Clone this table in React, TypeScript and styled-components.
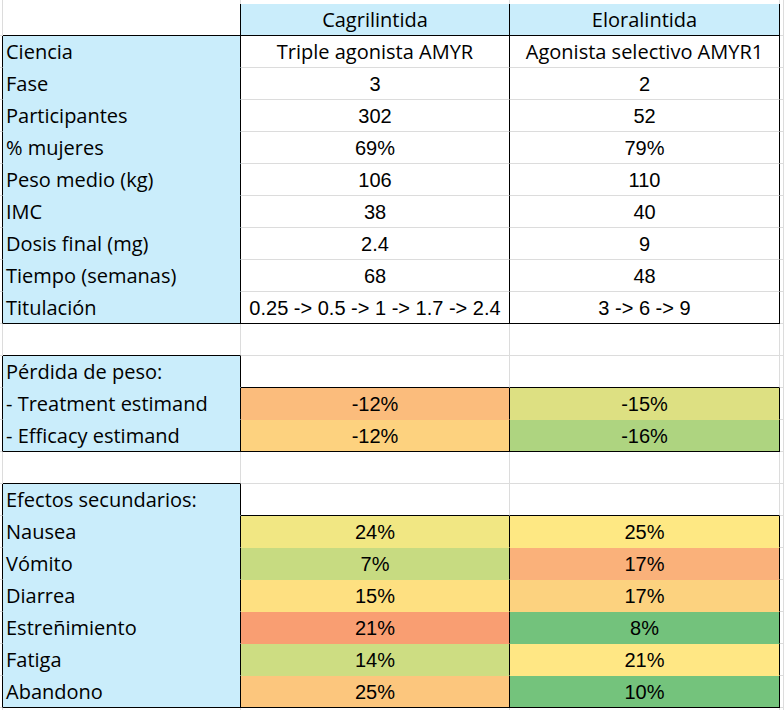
import React from "react";
import styled, { createGlobalStyle } from "styled-components";

const GRID = "#dcdcdc";
const BLACK = "#000000";
const BLUE = "#caedfb";
const WHITE = "#ffffff";

const GlobalStyle = createGlobalStyle`
  html, body { margin: 0; padding: 0; background: #ffffff; }
  body { width: 784px; height: 710px; overflow: hidden; }
`;

const Sheet = styled.div`
  display: grid;
  grid-template-columns: 3px 238px 269px 270px 4px;
  grid-template-rows: 4px repeat(22, 32px) 2px;
  width: 784px;
  height: 710px;
  background: #ffffff;
`;

type Kind = "label" | "text" | "num" | "none";

const Cell = styled.div<{
  $bg: string;
  $r: string;
  $b: string;
  $kind: Kind;
}>`
  box-sizing: border-box;
  min-width: 0;
  background: ${(p) => p.$bg};
  border-right: 1px solid ${(p) => p.$r};
  border-bottom: 1px solid ${(p) => p.$b};
  display: flex;
  align-items: flex-end;
  justify-content: ${(p) => (p.$kind === "label" ? "flex-start" : "center")};
  padding: 0 0 5px ${(p) => (p.$kind === "label" ? "3px" : "0")};
  font-family: ${(p) =>
    p.$kind === "num"
      ? '"Liberation Sans", Arial, sans-serif'
      : '"Open Sans", "Noto Sans", sans-serif'};
  font-size: 20px;
  line-height: 1;
  color: #000000;
  white-space: nowrap;
  overflow: hidden;
`;

type Content = { text: string; kind: Kind; bg?: string };

// sheet rows 1..22, columns 1..3 (A, B, C)
const content: Record<string, Content> = {};
const put = (r: number, c: number, text: string, kind: Kind, bg?: string) => {
  content[`${r}-${c}`] = { text, kind, bg };
};

put(1, 2, "Cagrilintida", "text", BLUE);
put(1, 3, "Eloralintida", "text", BLUE);

const mainRows: [string, string, string, Kind][] = [
  ["Ciencia", "Triple agonista AMYR", "Agonista selectivo AMYR1", "text"],
  ["Fase", "3", "2", "num"],
  ["Participantes", "302", "52", "num"],
  ["% mujeres", "69%", "79%", "num"],
  ["Peso medio (kg)", "106", "110", "num"],
  ["IMC", "38", "40", "num"],
  ["Dosis final (mg)", "2.4", "9", "num"],
  ["Tiempo (semanas)", "68", "48", "num"],
  ["Titulación", "0.25 -> 0.5 -> 1 -> 1.7 -> 2.4", "3 -> 6 -> 9", "num"],
];
mainRows.forEach(([l, b, c, k], i) => {
  const r = 2 + i;
  put(r, 1, l, "label", BLUE);
  put(r, 2, b, k, WHITE);
  put(r, 3, c, k, WHITE);
});

put(12, 1, "Pérdida de peso:", "label", BLUE);
const lossRows: [string, string, string, string, string][] = [
  ["- Treatment estimand", "-12%", "#fbbc7c", "-15%", "#dde082"],
  ["- Efficacy estimand", "-12%", "#fdd27f", "-16%", "#aed480"],
];
lossRows.forEach(([l, b, bb, c, cb], i) => {
  const r = 13 + i;
  put(r, 1, l, "label", BLUE);
  put(r, 2, b, "num", bb);
  put(r, 3, c, "num", cb);
});

put(16, 1, "Efectos secundarios:", "label", BLUE);
const sideRows: [string, string, string, string, string][] = [
  ["Nausea", "24%", "#f1e783", "25%", "#fee883"],
  ["Vómito", "7%", "#c7db81", "17%", "#fab17a"],
  ["Diarrea", "15%", "#fee081", "17%", "#fcd27f"],
  ["Estreñimiento", "21%", "#f99e72", "8%", "#73c27c"],
  ["Fatiga", "14%", "#cddd82", "21%", "#ffe784"],
  ["Abandono", "25%", "#fcc67d", "10%", "#74c37c"],
];
sideRows.forEach(([l, b, bb, c, cb], i) => {
  const r = 17 + i;
  put(r, 1, l, "label", BLUE);
  put(r, 2, b, "num", bb);
  put(r, 3, c, "num", cb);
});

// bordered blocks: [r1, c1, r2, c2]
const blocks: [number, number, number, number][] = [
  [1, 2, 1, 2],
  [1, 3, 1, 3],
  [2, 1, 10, 1],
  [2, 2, 10, 2],
  [2, 3, 10, 3],
  [12, 1, 14, 1],
  [13, 2, 14, 2],
  [13, 3, 14, 3],
  [16, 1, 22, 1],
  [17, 2, 22, 2],
  [17, 3, 22, 3],
];

const blockId = (r: number, c: number) =>
  blocks.findIndex(([r1, c1, r2, c2]) => r >= r1 && r <= r2 && c >= c1 && c <= c2);

const bgOf = (r: number, c: number) => content[`${r}-${c}`]?.bg ?? WHITE;

const edge = (r: number, c: number, r2: number, c2: number) => {
  const a = blockId(r, c);
  const b = blockId(r2, c2);
  if (a !== b && (a >= 0 || b >= 0)) return BLACK;
  const bg = bgOf(r, c);
  return bg !== WHITE ? bg : GRID;
};

export default function App() {
  const cells: React.ReactNode[] = [];
  for (let r = 0; r <= 23; r++) {
    for (let c = 0; c <= 4; c++) {
      const item = content[`${r}-${c}`];
      cells.push(
        <Cell
          key={`${r}-${c}`}
          $bg={bgOf(r, c)}
          $r={edge(r, c, r, c + 1)}
          $b={edge(r, c, r + 1, c)}
          $kind={item?.kind ?? "none"}
        >
          {item?.text}
        </Cell>
      );
    }
  }
  return (
    <>
      <GlobalStyle />
      <Sheet>{cells}</Sheet>
    </>
  );
}
